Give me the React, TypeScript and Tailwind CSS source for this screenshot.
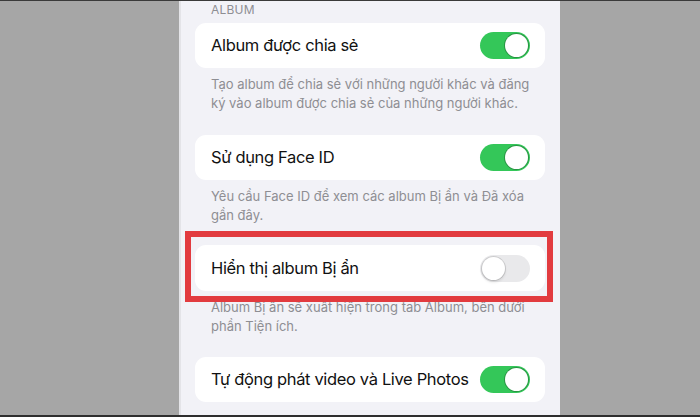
import React from "react";

function Toggle({ on }: { on: boolean }) {
  return on ? (
    <div className="w-[50px] h-[27px] rounded-full bg-[#34c759] flex items-center justify-end p-[2px] shrink-0">
      <div className="w-[23px] h-[23px] rounded-full bg-white shadow-[0_0_0_1px_rgba(0,0,0,0.25)]" />
    </div>
  ) : (
    <div className="w-[50px] h-[27px] rounded-full bg-[#e9e9eb] flex items-center justify-start p-[2px] shrink-0">
      <div className="w-[23px] h-[23px] rounded-full bg-white shadow-[0_0_0_1px_rgba(0,0,0,0.12),0_2px_3px_rgba(0,0,0,0.12)]" />
    </div>
  );
}

function Row({ label, on, h = "h-[45px]" }: { label: string; on: boolean; h?: string }) {
  return (
    <div className={`${h} bg-white rounded-[11px] flex items-center justify-between pl-4 pr-[15px]`}>
      <span className="text-[16.5px] text-[#111] tracking-[-0.35px] whitespace-nowrap">{label}</span>
      <Toggle on={on} />
    </div>
  );
}

function Desc({ lines, mb }: { lines: string[]; mb: string }) {
  return (
    <div className={`pt-[7px] pl-4 ${mb} text-[13px] leading-[19px] text-[#8e8e93] whitespace-nowrap`}>
      {lines.map((l) => (
        <div key={l}>{l}</div>
      ))}
    </div>
  );
}

export default function App() {
  return (
    <div
      className="relative w-[700px] h-[417px] flex flex-col bg-[#a6a6a6] overflow-hidden"
      style={{ fontFamily: "Inter, 'Noto Sans', sans-serif" }}
    >
      <div className="h-[1px] bg-[#3a3a3a] shrink-0" />
      <div className="flex flex-1 min-h-0">
        <div className="w-[179px] shrink-0 bg-[#a6a6a6]" />
        <div className="w-[381px] shrink-0 bg-[#f2f2f7] border-l-[2px] border-[#e4e4e8] pl-[14px] pr-[15px] overflow-hidden">
          <div className="h-[22px] pl-4 pt-[1px] text-[12px] leading-[16px] text-[#8e8e93] tracking-[0.2px]">
            ALBUM
          </div>
          <Row label="Album được chia sẻ" on />
          <Desc
            lines={[
              "Tạo album để chia sẻ với những người khác và đăng",
              "ký vào album được chia sẻ của những người khác.",
            ]}
            mb="mb-[22px]"
          />
          <Row label="Sử dụng Face ID" on />
          <Desc
            lines={["Yêu cầu Face ID để xem các album Bị ẩn và Đã xóa", "gần đây."]}
            mb="mb-[20px]"
          />
          <Row label="Hiển thị album Bị ẩn" on={false} h="h-[46px]" />
          <Desc
            lines={["Album Bị ẩn sẽ xuất hiện trong tab Album, bên dưới", "phần Tiện ích."]}
            mb="mb-[21px]"
          />
          <Row label="Tự động phát video và Live Photos" on />
        </div>
        <div className="flex-1 bg-[#a6a6a6]" />
      </div>
      <div className="h-[2px] bg-[#2e2e2e] shrink-0" />
      <div className="absolute left-[185px] top-[231px] w-[368px] h-[71px] border-[6px] border-[#e23b3f]" />
    </div>
  );
}
